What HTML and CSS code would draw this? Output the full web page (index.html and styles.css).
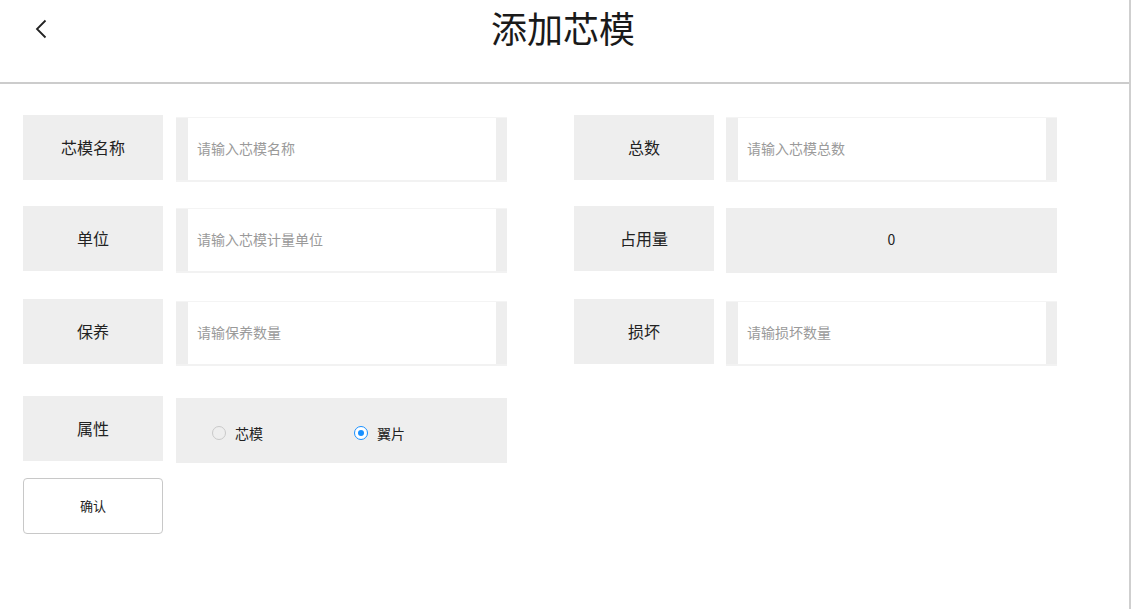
FILE: index.html
```html
<!DOCTYPE html>
<html lang="zh-CN">
<head>
<meta charset="utf-8">
<title>添加芯模</title>
<link rel="stylesheet" href="styles.css">
</head>
<body>
<div class="page">
  <header class="header">
    <a class="back" href="#" aria-label="返回">
      <svg width="12" height="20" viewBox="0 0 12 20"><path d="M10.5 1.5 L2 10 L10.5 18.5" fill="none" stroke="#222" stroke-width="1.8"/></svg>
    </a>
    <h1 class="title">添加芯模</h1>
    <span class="spacer"></span>
  </header>

  <main class="form">
    <div class="row r1">
      <div class="field">
        <div class="label">芯模名称</div>
        <div class="input-wrap"><input class="input" placeholder="请输入芯模名称"></div>
      </div>
      <div class="field right">
        <div class="label">总数</div>
        <div class="input-wrap"><input class="input" placeholder="请输入芯模总数"></div>
      </div>
    </div>

    <div class="row r2">
      <div class="field">
        <div class="label">单位</div>
        <div class="input-wrap"><input class="input" placeholder="请输入芯模计量单位"></div>
      </div>
      <div class="field right">
        <div class="label">占用量</div>
        <div class="value-box">0</div>
      </div>
    </div>

    <div class="row r3">
      <div class="field">
        <div class="label">保养</div>
        <div class="input-wrap"><input class="input" placeholder="请输保养数量"></div>
      </div>
      <div class="field right">
        <div class="label">损坏</div>
        <div class="input-wrap"><input class="input" placeholder="请输损坏数量"></div>
      </div>
    </div>

    <div class="row r4">
      <div class="field">
        <div class="label">属性</div>
        <div class="radio-box">
          <label class="radio"><span class="dot"></span><span class="radio-text">芯模</span></label>
          <label class="radio checked"><span class="dot"></span><span class="radio-text">翼片</span></label>
        </div>
      </div>
    </div>

    <button class="confirm" type="button">确认</button>
  </main>
</div>
</body>
</html>
```

FILE: styles.css
```css
* { box-sizing: border-box; }

html, body {
  margin: 0;
  padding: 0;
  background: #fff;
  font-family: "Noto Sans CJK SC", "Noto Sans", sans-serif;
  color: #222;
}

.page {
  width: 1131px;
  min-height: 609px;
  border-right: 2px solid #cfcfcf;
}

.header {
  height: 84px;
  border-bottom: 2px solid #cccccc;
  display: grid;
  grid-template-columns: 1fr auto 1fr;
  align-items: start;
}

.back {
  display: block;
  width: 30px;
  margin: 19px 0 0 35px;
  line-height: 0;
}

.title {
  margin: 3px 3px 0 0;
  font-size: 36px;
  font-weight: 400;
  line-height: 48px;
  color: #1a1a1a;
}

.form {
  padding: 31px 0 0 23px;
}

.row {
  display: flex;
  gap: 67px;
}

.r2 { margin-top: 24px; }
.r3 { margin-top: 26px; }
.r4 { margin-top: 30px; }

.field {
  display: flex;
  gap: 13px;
  align-items: flex-start;
}

.field.right {
  gap: 12px;
}

.label {
  width: 140px;
  height: 65px;
  background: #eeeeee;
  display: flex;
  align-items: center;
  justify-content: center;
  font-size: 16px;
  color: #222;
  padding-bottom: 1px;
}

.input-wrap {
  width: 331px;
  height: 65px;
  margin-top: 2px;
  background: #eeeeee;
  border-top: 1px solid #f4f4f4;
  border-bottom: 2px solid #f2f2f2;
  padding: 0 11px 0 12px;
}

.input {
  display: block;
  width: 100%;
  height: 100%;
  border: none;
  outline: none;
  background: #fff;
  padding: 0 0 2px 9px;
  font-family: inherit;
  font-size: 14px;
  color: #333;
}

.input::placeholder {
  color: #9a9a9a;
}

.value-box {
  width: 331px;
  height: 65px;
  margin-top: 2px;
  background: #eeeeee;
  display: flex;
  align-items: center;
  justify-content: center;
  font-size: 14px;
  color: #222;
  padding-bottom: 3px;
}

.radio-box {
  width: 331px;
  height: 65px;
  margin-top: 2px;
  background: #eeeeee;
  display: flex;
  align-items: center;
  padding: 5px 0 0 36px;
}

.radio {
  width: 142px;
  display: flex;
  align-items: center;
  gap: 9px;
  font-size: 14px;
  color: #222;
  cursor: pointer;
}

.dot {
  width: 14px;
  height: 14px;
  border-radius: 50%;
  border: 1px solid #c9c9c9;
  background: transparent;
  position: relative;
  flex: none;
}

.radio.checked .dot {
  border-color: #1890ff;
  background: #fff;
}

.radio.checked .dot::after {
  content: "";
  position: absolute;
  left: 3px;
  top: 3px;
  width: 6px;
  height: 6px;
  border-radius: 50%;
  background: #1890ff;
}

.confirm {
  display: flex;
  align-items: center;
  justify-content: center;
  width: 140px;
  height: 56px;
  margin-top: 15px;
  border: 1px solid #c8c8c8;
  border-radius: 4px;
  background: #fff;
  font-family: inherit;
  font-size: 13px;
  color: #222;
  padding: 0 0 2px 0;
}
```
